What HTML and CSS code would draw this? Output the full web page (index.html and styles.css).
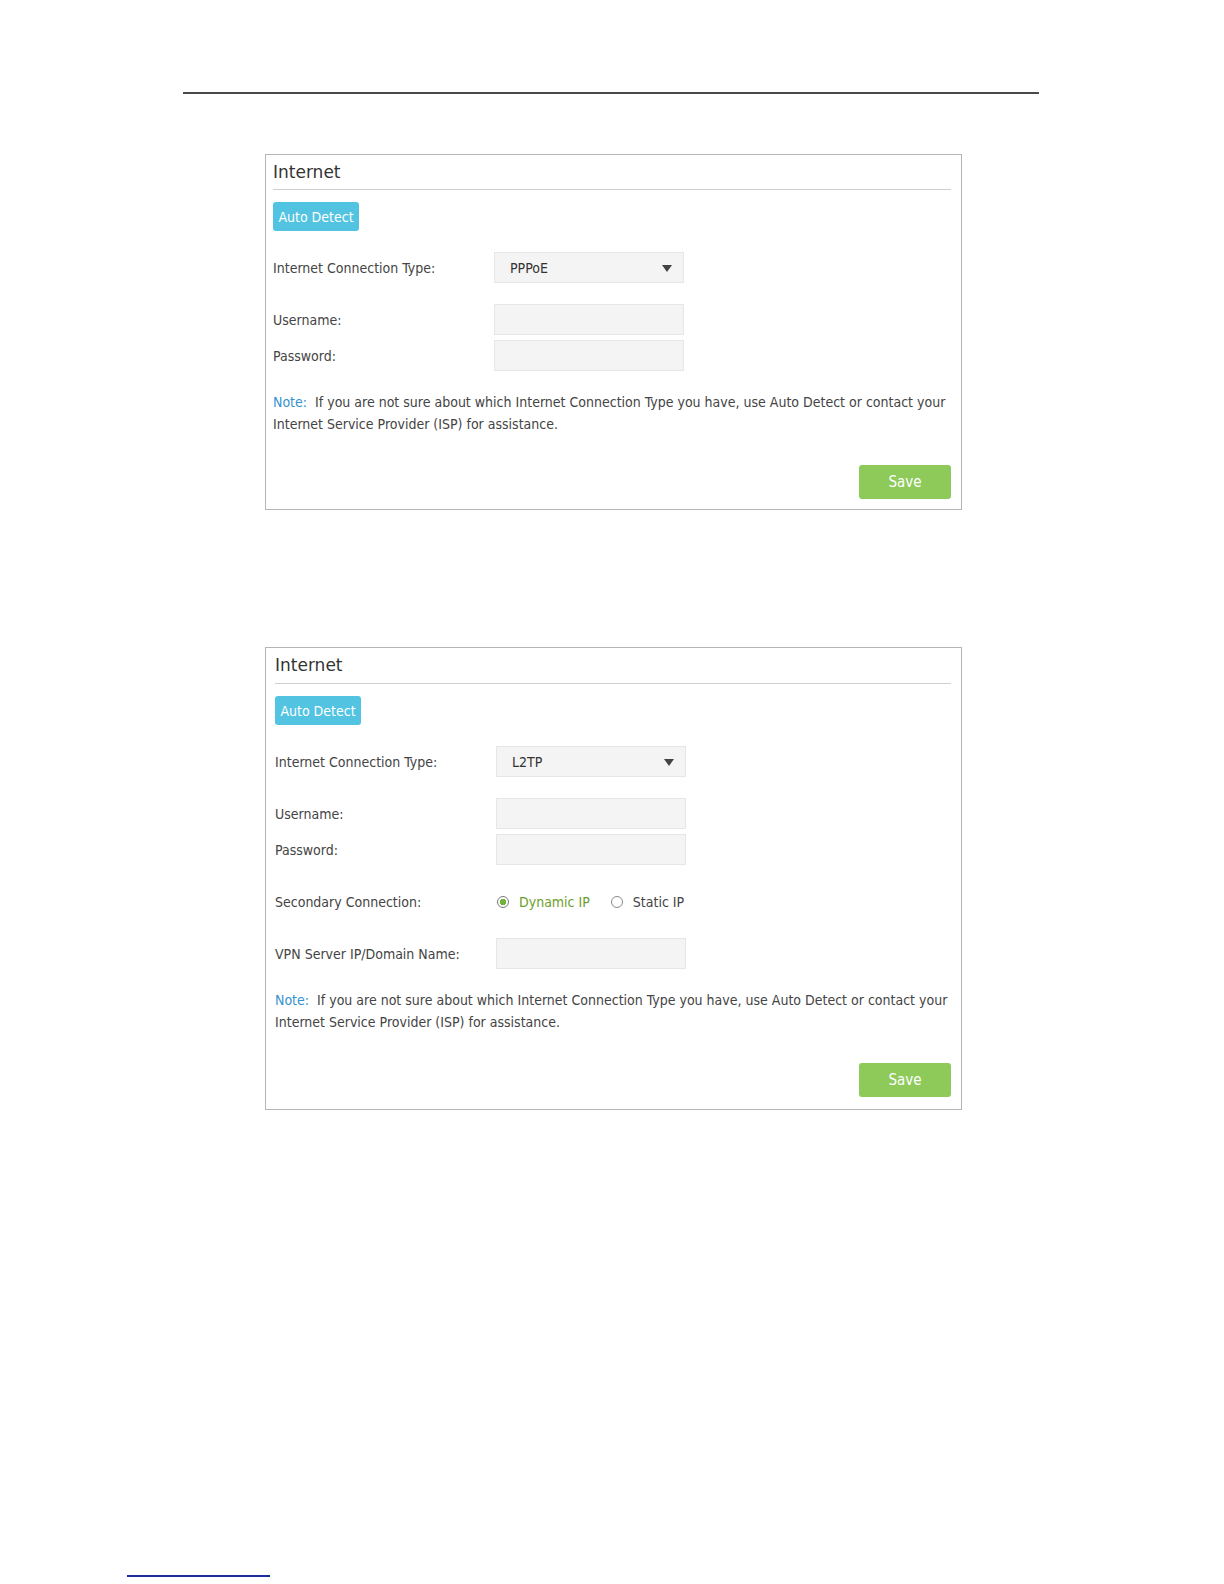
FILE: index.html
```html
<!DOCTYPE html>
<html lang="en">

<head>
    <meta charset="UTF-8">
    <meta name="viewport" content="width=device-width, initial-scale=1.0">
    <title>Internet</title>
    <link rel="stylesheet" href="styles.css">
</head>

<body>
    <div class="page">
        <div class="top-rule"></div>

        <!-- PPPoE -->
        <div class="card card-first">
            <h2 class="card-title">Internet</h2>
            <button class="btn-detect">Auto Detect</button>

            <div class="field field-type">
                <label>Internet Connection Type:</label>
                <div class="select">
                    <span>PPPoE</span>
                    <span class="caret"></span>
                </div>
            </div>
            <div class="field field-gap">
                <label>Username:</label>
                <input type="text">
            </div>
            <div class="field field-tight">
                <label>Password:</label>
                <input type="password">
            </div>

            <p class="note"><span class="note-tag">Note:</span>&nbsp; If you are not sure about which Internet Connection Type you have, use Auto Detect or contact your Internet Service Provider (ISP) for assistance.</p>

            <div class="actions">
                <button class="btn-save">Save</button>
            </div>
        </div>

        <!-- L2TP -->
        <div class="card card-second">
            <h2 class="card-title">Internet</h2>
            <button class="btn-detect">Auto Detect</button>

            <div class="field field-type">
                <label>Internet Connection Type:</label>
                <div class="select">
                    <span>L2TP</span>
                    <span class="caret"></span>
                </div>
            </div>
            <div class="field field-gap">
                <label>Username:</label>
                <input type="text">
            </div>
            <div class="field field-tight">
                <label>Password:</label>
                <input type="password">
            </div>
            <div class="field field-gap">
                <label>Secondary Connection:</label>
                <div class="radios">
                    <span class="radio checked"><i></i>Dynamic IP</span>
                    <span class="radio"><i></i>Static IP</span>
                </div>
            </div>
            <div class="field field-gap">
                <label>VPN Server IP/Domain Name:</label>
                <input type="text">
            </div>

            <p class="note"><span class="note-tag">Note:</span>&nbsp; If you are not sure about which Internet Connection Type you have, use Auto Detect or contact your Internet Service Provider (ISP) for assistance.</p>

            <div class="actions">
                <button class="btn-save">Save</button>
            </div>
        </div>

        <div class="bottom-link"></div>
    </div>
</body>

</html>
```

FILE: styles.css
```css
body {
    margin: 0;
    background: #fff;
    font-family: "DejaVu Sans Condensed", "DejaVu Sans", sans-serif;
    font-size: 14px;
    color: #444;
}

.page {
    padding-top: 92px;
}

.top-rule {
    width: 856px;
    margin-left: 183px;
    border-top: 2px solid #4a4a4a;
}

.card {
    box-sizing: border-box;
    width: 697px;
    margin-left: 265px;
    padding: 0 10px 10px 7px;
    border: 1px solid #b4b4b4;
}

.card-first {
    margin-top: 60px;
}

.card-second {
    margin-top: 137px;
    padding-left: 9px;
    padding-bottom: 12px;
}

.card-title {
    margin: 0;
    line-height: 34px;
    font-family: "DejaVu Sans", sans-serif;
    font-size: 17px;
    font-weight: normal;
    color: #333;
    border-bottom: 1px solid #cfcfcf;
}

.card-second .card-title {
    line-height: 35px;
}

.btn-detect {
    display: block;
    margin-top: 12px;
    width: 86px;
    height: 29px;
    padding: 0;
    border: none;
    border-radius: 3px;
    background-color: #52c3e1;
    color: #fff;
    font-family: inherit;
    font-size: 14px;
}

.field {
    display: flex;
    align-items: center;
    height: 31px;
}

.field-type,
.field-gap {
    margin-top: 21px;
}

.field-tight {
    margin-top: 5px;
}

.field label {
    width: 221px;
    flex-shrink: 0;
}

.field input,
.select {
    box-sizing: border-box;
    width: 190px;
    height: 31px;
    margin: 0;
    border: 1px solid #e6e6e6;
    background-color: #f4f4f4;
}

.select {
    display: flex;
    align-items: center;
    justify-content: space-between;
    padding: 0 11px 0 15px;
    color: #333;
}

.caret {
    width: 0;
    height: 0;
    border-left: 5px solid transparent;
    border-right: 5px solid transparent;
    border-top: 7px solid #444;
    margin-top: 2px;
}

.radios {
    display: flex;
    align-items: center;
    padding-left: 1px;
}

.radio {
    display: flex;
    align-items: center;
    margin-right: 21px;
}

.radio i {
    box-sizing: border-box;
    width: 12px;
    height: 12px;
    margin-right: 10px;
    border: 1px solid #8a8a8a;
    border-radius: 50%;
}

.radio.checked {
    color: #6b9e2c;
}

.radio.checked i {
    border-color: #7a7a7a;
    background: radial-gradient(circle, #72b43a 0 3px, #fff 3.5px);
}

.note {
    margin: 20px 0 0;
    line-height: 22px;
    color: #444;
}

.note-tag {
    color: #3493cf;
}

.actions {
    display: flex;
    justify-content: flex-end;
    margin-top: 30px;
}

.btn-save {
    width: 92px;
    height: 34px;
    padding: 0;
    border: none;
    border-radius: 3px;
    background-color: #8dca5a;
    color: #fff;
    font-family: inherit;
    font-size: 15px;
}

.bottom-link {
    width: 143px;
    margin: 465px 0 0 127px;
    border-top: 2px solid #1c2c9c;
}
```
